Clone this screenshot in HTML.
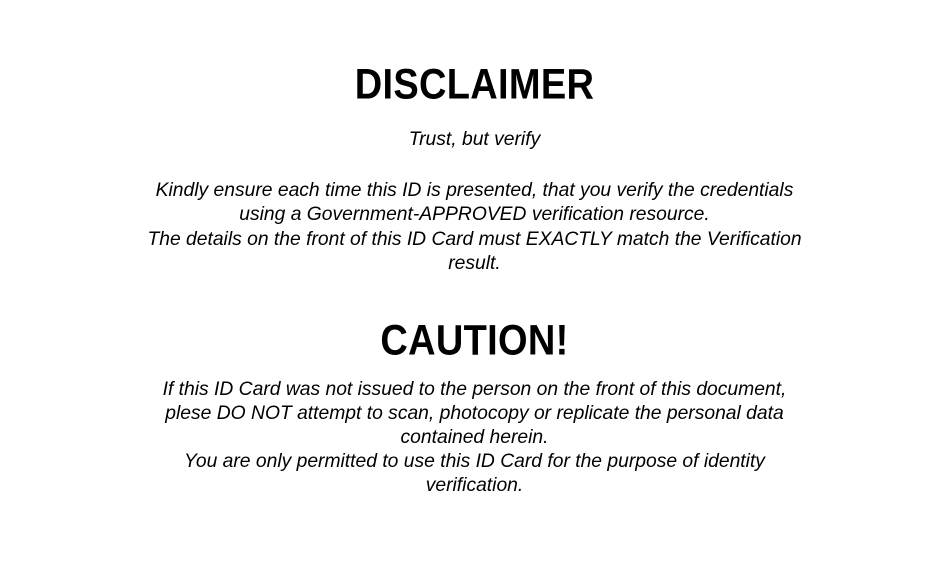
<!DOCTYPE html>
<html><head><meta charset="utf-8"><style>
html,body{margin:0;padding:0;background:#fff;}
body{width:949px;height:587px;position:relative;overflow:hidden;font-family:"Liberation Sans",sans-serif;color:#000;}
.l{position:absolute;left:0;width:949px;text-align:center;white-space:nowrap;font-style:italic;font-size:19.3px;line-height:24px;}
.h{position:absolute;left:0;width:949px;text-align:center;white-space:nowrap;font-weight:bold;font-size:38px;line-height:40px;letter-spacing:0.3px;transform:scaleY(1.12);}
</style></head><body>
<div class="h" style="top:65px">DISCLAIMER</div>
<div class="l" style="top:128px">Trust, but verify</div>
<div class="l" style="top:179px">Kindly ensure each time this ID is presented, that you verify the credentials</div>
<div class="l" style="top:203px">using a Government-APPROVED verification resource.</div>
<div class="l" style="top:228px">The details on the front of this ID Card must EXACTLY match the Verification</div>
<div class="l" style="top:252px">result.</div>
<div class="h" style="top:321px">CAUTION!</div>
<div class="l" style="top:378px">If this ID Card was not issued to the person on the front of this document,</div>
<div class="l" style="top:402px">plese DO NOT attempt to scan, photocopy or replicate the personal data</div>
<div class="l" style="top:426px">contained herein.</div>
<div class="l" style="top:450px">You are only permitted to use this ID Card for the purpose of identity</div>
<div class="l" style="top:474px">verification.</div>
</body></html>
